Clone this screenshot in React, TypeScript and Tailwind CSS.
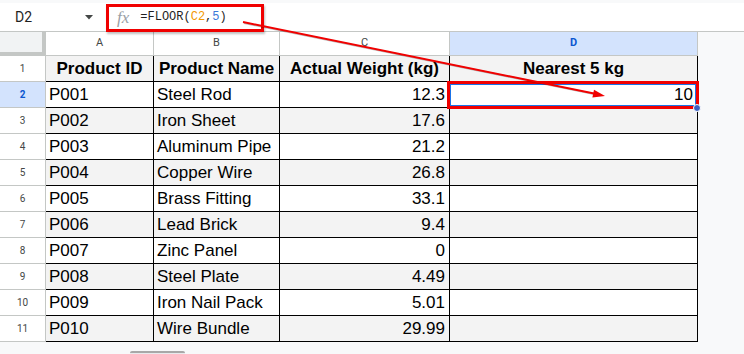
import React from "react";

const rows = [
  ["P001", "Steel Rod", "12.3"],
  ["P002", "Iron Sheet", "17.6"],
  ["P003", "Aluminum Pipe", "21.2"],
  ["P004", "Copper Wire", "26.8"],
  ["P005", "Brass Fitting", "33.1"],
  ["P006", "Lead Brick", "9.4"],
  ["P007", "Zinc Panel", "0"],
  ["P008", "Steel Plate", "4.49"],
  ["P009", "Iron Nail Pack", "5.01"],
  ["P010", "Wire Bundle", "29.99"],
];

const arial = { fontFamily: '"Liberation Sans", Arial, sans-serif' };
const roboto = { fontFamily: 'Roboto, "Liberation Sans", sans-serif' };

export default function App() {
  return (
    <div className="relative w-[744px] h-[354px] overflow-hidden bg-[#f8f9fa]">
      <div className="h-[3px] bg-[#f8f9fa]" />
      {/* formula bar */}
      <div className="h-[28px] bg-white flex items-center" style={roboto}>
        <div className="w-[104px] flex items-center pl-[15px] pr-[10px] justify-between">
          <span className="text-[14px] text-[#1f1f1f]">D2</span>
          <svg width="8" height="5" viewBox="0 0 8 5" className="mr-[1px]">
            <path d="M0 0 L8 0 L4 4.5 Z" fill="#444746" />
          </svg>
        </div>
        <div className="flex items-center pl-[13px]">
          <span
            className="text-[17px] italic text-[#9aa0a6] mr-[11px] leading-none"
            style={{ fontFamily: '"Liberation Serif", serif' }}
          >
            fx
          </span>
          <span className="text-[12px] text-[#1f1f1f]" style={{ fontFamily: '"Liberation Mono", monospace' }}>
            =FLOOR(<span className="text-[#f29900]">C2</span>,<span className="text-[#3c78d8]">5</span>)
          </span>
        </div>
      </div>
      {/* column header row */}
      <div className="flex h-[25px] border-t border-[#c4c7c5]" style={roboto}>
        <div className="w-[46px] h-full bg-[#f1f3f4] border-r-4 border-b-4 border-[#c4c7c5]" />
        {[
          ["A", "w-[108px]"],
          ["B", "w-[126px]"],
          ["C", "w-[170px]"],
        ].map(([l, w]) => (
          <div key={l} className={`${w} h-full bg-white border-r border-b border-[#c4c7c5] flex items-center justify-center text-[11px] text-[#444746]`}>
            {l}
          </div>
        ))}
        <div className="w-[248px] h-full bg-[#d3e3fd] border-r border-b border-[#c4c7c5] flex items-center justify-center text-[11px] font-bold text-[#0b57d0]">
          D
        </div>
      </div>
      {/* header row 1 */}
      <div className="flex h-[26px]">
        <div className="w-[46px] h-full bg-white border-r border-b border-[#c4c7c5] flex items-center justify-center text-[10px] text-[#444746]" style={roboto}>
          1
        </div>
        <div className="flex h-full bg-[#f3f3f3] text-[17px] font-bold text-black" style={arial}>
          <div className="w-[108px] border-r border-b border-black flex items-center justify-center pt-[1px]">Product ID</div>
          <div className="w-[126px] border-r border-b border-black flex items-center justify-center pt-[1px]">Product Name</div>
          <div className="w-[170px] border-r border-b border-black flex items-center justify-center pt-[1px]">Actual Weight (kg)</div>
          <div className="w-[248px] border-r border-b border-black flex items-center justify-center pt-[1px]">Nearest 5 kg</div>
        </div>
      </div>
      {rows.map((r, i) => {
        const n = i + 2;
        const sel = n === 2;
        const bg = i % 2 === 0 ? "bg-white" : "bg-[#f3f3f3]";
        return (
          <div key={n} className="flex h-[26px]">
            <div
              className={`w-[46px] h-full border-r border-b border-[#c4c7c5] flex items-center justify-center text-[10px] ${
                sel ? "bg-[#d3e3fd] font-bold text-[#0b57d0]" : "bg-white text-[#444746]"
              }`}
              style={roboto}
            >
              {n}
            </div>
            <div className={`flex h-full ${bg} text-[17px] text-black`} style={arial}>
              <div className="w-[108px] border-r border-b border-black flex items-center px-[3px] pt-[1px]">{r[0]}</div>
              <div className="w-[126px] border-r border-b border-black flex items-center px-[3px] pt-[1px]">{r[1]}</div>
              <div className="w-[170px] border-r border-b border-black flex items-center justify-end pr-[4px] pt-[1px]">{r[2]}</div>
              <div className="w-[248px] border-r border-b border-black flex items-center justify-end pr-[4px] pt-[1px]">
                {sel ? "10" : ""}
              </div>
            </div>
          </div>
        );
      })}
      {/* bottom scroll tab */}
      <div className="absolute left-[130px] top-[351px] w-[55px] h-[6px] rounded-t-[2px] border-t-2 border-[#a8a8a8] bg-[#e8eaed]" />
      {/* formula red box */}
      <div className="absolute left-[106px] top-[4px] w-[158px] h-[28px] border-[3px] border-[#f00000] shadow-[1px_2px_2px_rgba(0,0,0,0.25)]" />
      {/* D2 selection */}
      <div className="absolute left-[447px] top-[81px] w-[252px] h-[28px] border-[3px] border-[#f00000]">
        <div className="w-full h-full border border-[#1a73e8]" />
      </div>
      <div className="absolute left-[693px] top-[104px] w-[8px] h-[8px] rounded-full bg-[#3b5fc0] border border-white" />
      {/* arrow */}
      <svg className="absolute left-0 top-0 pointer-events-none" width="744" height="354">
        <line x1="244" y1="23" x2="594" y2="94" stroke="rgba(0,0,0,0.25)" strokeWidth="2" />
        <line x1="243" y1="22" x2="594" y2="93.6" stroke="#f00000" strokeWidth="2" />
        <polygon points="605,96 592.4,97.5 594,89.7" fill="#f00000" />
      </svg>
    </div>
  );
}
